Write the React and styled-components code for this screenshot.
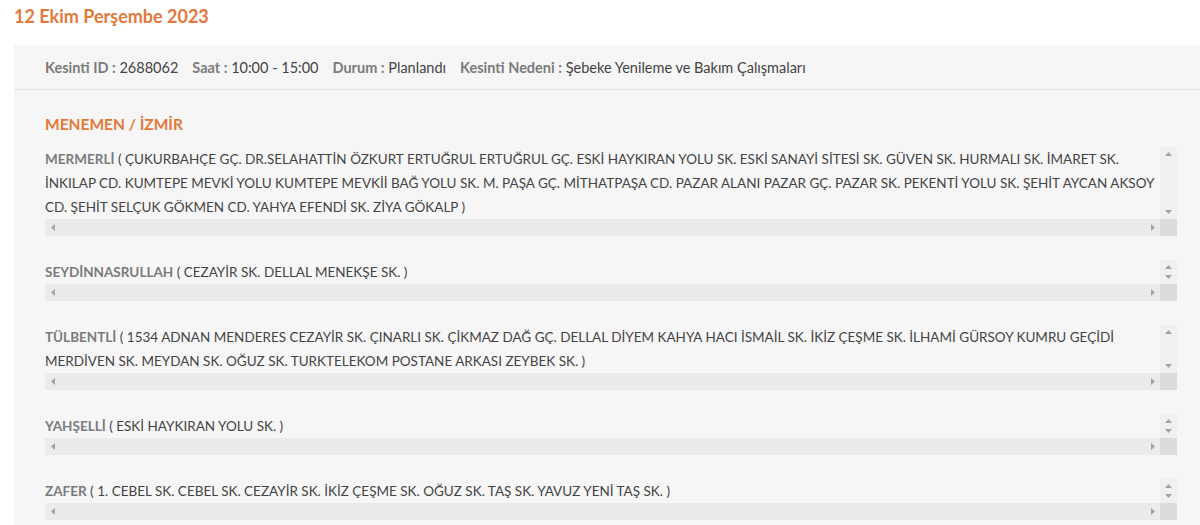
import React from "react";
import styled, { createGlobalStyle } from "styled-components";

const Global = createGlobalStyle`
  html, body { margin: 0; padding: 0; background: #ffffff; }
  body { font-family: Lato, "Open Sans", "Noto Sans", sans-serif; overflow: hidden; }
`;

const Page = styled.div`
  width: 1200px;
  height: 525px;
  overflow: hidden;
`;

const DateTitle = styled.h2`
  margin: 0;
  padding: 5px 0 0 14px;
  height: 45px;
  box-sizing: border-box;
  font-size: 18px;
  line-height: 22px;
  font-weight: 700;
  color: #e5773a;
`;

const Panel = styled.div`
  margin-left: 14px;
  background: #f6f6f6;
  height: 480px;
`;

const InfoBar = styled.div`
  display: flex;
  align-items: center;
  gap: 14px;
  height: 44px;
  padding-left: 31px;
  border-bottom: 1px solid #e4e4e4;
  font-size: 14.5px;
  color: #444;
`;

const Info = styled.span`
  white-space: nowrap;
`;

const Label = styled.b`
  color: #7b7b7b;
  font-weight: 700;
`;

const Body = styled.div`
  padding: 25px 23px 0 31px;
  display: flex;
  flex-direction: column;
  gap: 24px;
`;

const Region = styled.h3`
  margin: 0 0 -10px;
  font-size: 15.5px;
  line-height: 18px;
  font-weight: 700;
  color: #e5773a;
`;

const ScrollBox = styled.div`
  display: grid;
  grid-template-columns: 1fr 17px;
  grid-template-rows: ${(p) => p.$lines * 24}px 17px;
`;

const Content = styled.div`
  font-size: 13.5px;
  line-height: 24px;
  color: #444;
  white-space: pre;
  overflow: hidden;
`;

const Name = styled.b`
  color: #7b7b7b;
  font-weight: 700;
`;

const VBar = styled.div`
  background: #f0f0f0;
  display: flex;
  flex-direction: column;
  justify-content: space-between;
  align-items: center;
  padding: 5px 0;
  box-sizing: border-box;
`;

const HBar = styled.div`
  background: #ebebeb;
  display: flex;
  justify-content: space-between;
  align-items: center;
  padding: 0 5px 0 6px;
`;

const Corner = styled.div`
  background: #dcdcdc;
`;

const Arrow = ({ dir }) => {
  const pts = {
    up: "0,4 3.5,0 7,4",
    down: "0,0 3.5,4 7,0",
    left: "4,0 0,3.5 4,7",
    right: "0,0 4,3.5 0,7",
  }[dir];
  const vert = dir === "up" || dir === "down";
  return (
    <svg width={vert ? 7 : 4} height={vert ? 4 : 7} viewBox={vert ? "0 0 7 4" : "0 0 4 7"}>
      <polygon points={pts} fill="#a3a3a3" />
    </svg>
  );
};

const items = [
  {
    name: "MERMERLİ",
    lines: [
      " ( ÇUKURBAHÇE GÇ. DR.SELAHATTİN ÖZKURT ERTUĞRUL ERTUĞRUL GÇ. ESKİ HAYKIRAN YOLU SK. ESKİ SANAYİ SİTESİ SK. GÜVEN SK. HURMALI SK. İMARET SK.",
      "İNKILAP CD. KUMTEPE MEVKİ YOLU KUMTEPE MEVKİİ BAĞ YOLU SK. M. PAŞA GÇ. MİTHATPAŞA CD. PAZAR ALANI PAZAR GÇ. PAZAR SK. PEKENTİ YOLU SK. ŞEHİT AYCAN AKSOY",
      "CD. ŞEHİT SELÇUK GÖKMEN CD. YAHYA EFENDİ SK. ZİYA GÖKALP )",
    ],
  },
  { name: "SEYDİNNASRULLAH", lines: [" ( CEZAYİR SK. DELLAL MENEKŞE SK. )"] },
  {
    name: "TÜLBENTLİ",
    lines: [
      " ( 1534 ADNAN MENDERES CEZAYİR SK. ÇINARLI SK. ÇİKMAZ DAĞ GÇ. DELLAL DİYEM KAHYA HACI İSMAİL SK. İKİZ ÇEŞME SK. İLHAMİ GÜRSOY KUMRU GEÇİDİ",
      "MERDİVEN SK. MEYDAN SK. OĞUZ SK. TURKTELEKOM POSTANE ARKASI ZEYBEK SK. )",
    ],
  },
  { name: "YAHŞELLİ", lines: [" ( ESKİ HAYKIRAN YOLU SK. )"] },
  {
    name: "ZAFER",
    lines: [" ( 1. CEBEL SK. CEBEL SK. CEZAYİR SK. İKİZ ÇEŞME SK. OĞUZ SK. TAŞ SK. YAVUZ YENİ TAŞ SK. )"],
  },
];

export default function App() {
  return (
    <Page>
      <Global />
      <DateTitle>12 Ekim Perşembe 2023</DateTitle>
      <Panel>
        <InfoBar>
          <Info><Label>Kesinti ID :</Label> 2688062</Info>
          <Info><Label>Saat :</Label> 10:00 - 15:00</Info>
          <Info><Label>Durum :</Label> Planlandı</Info>
          <Info><Label>Kesinti Nedeni :</Label> Şebeke Yenileme ve Bakım Çalışmaları</Info>
        </InfoBar>
        <Body>
          <Region>MENEMEN / İZMİR</Region>
          {items.map((it) => (
            <ScrollBox key={it.name} $lines={it.lines.length}>
              <Content>
                <Name>{it.name}</Name>
                {it.lines.join("\n")}
              </Content>
              <VBar>
                <Arrow dir="up" />
                <Arrow dir="down" />
              </VBar>
              <HBar>
                <Arrow dir="left" />
                <Arrow dir="right" />
              </HBar>
              <Corner />
            </ScrollBox>
          ))}
        </Body>
      </Panel>
    </Page>
  );
}
